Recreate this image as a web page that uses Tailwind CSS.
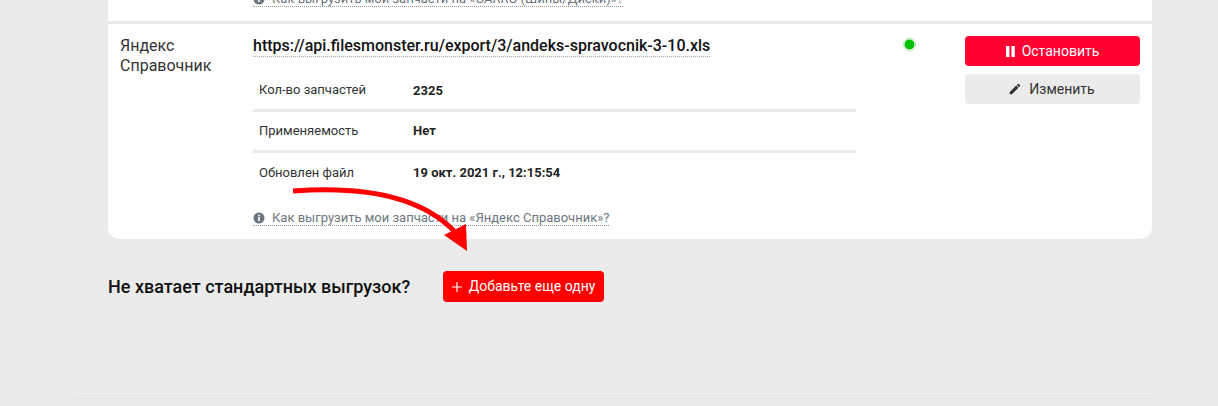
<!DOCTYPE html>
<html lang="ru">
<head>
<meta charset="UTF-8">
<title>Выгрузки</title>
<script src="https://cdn.jsdelivr.net/npm/@tailwindcss/browser@4"></script>
</head>
<body class="bg-[#ebebeb] font-['Roboto',sans-serif] h-[406px] overflow-hidden relative">

<div class="mx-[66px] w-[1086px] h-[406px] flex flex-col">
  <div class="ml-[42px] w-[1044px] bg-white rounded-b-xl overflow-hidden">
    <!-- previous row, cut off by the top of the window -->
    <div class="h-[21px] pl-[145px] flex items-end pb-[14px] overflow-visible">
      <a class="flex items-center gap-[7px] text-[13px] leading-[15px] text-[#6b7680] border-b border-dotted border-[#999] whitespace-nowrap h-[16px]">
        <svg class="w-[12px] h-[12px]" viewBox="0 0 12 12"><circle cx="6" cy="6" r="5.5" fill="#6b7680"/><rect x="5.2" y="5" width="1.6" height="4" fill="#fff"/><rect x="5.2" y="2.7" width="1.6" height="1.5" fill="#fff"/></svg>
        Как выгрузить мои запчасти на «САRRO (Шины/Диски)»?
      </a>
    </div>

    <div class="border-t-[3px] border-[#ebebeb] h-[218px] flex">
      <div class="w-[145px] pl-[12px] pt-[12px] text-[16px] leading-[20px] text-[#333]">Яндекс<br>Справочник</div>

      <div class="w-[603px] pt-[12px]">
        <a class="block w-fit text-[16px] leading-[20px] font-medium text-[#111] border-b border-dotted border-[#aaa]">https://api.filesmonster.ru/export/3/andeks-spravocnik-3-10.xls</a>
        <div class="mt-[11px] text-[13px]">
          <div class="h-[44px] pt-[4px] flex items-center border-b-[3px] border-[#ebebeb] px-[6px]">
            <span class="w-[154px] mb-[2px] text-[#333]">Кол-во запчастей</span><b class="font-bold text-[#222]">2325</b>
          </div>
          <div class="h-[41px] flex items-center border-b-[3px] border-[#ebebeb] px-[6px]">
            <span class="w-[154px] text-[#333]">Применяемость</span><b class="font-bold text-[#222]">Нет</b>
          </div>
          <div class="h-[39px] flex items-center px-[6px]">
            <span class="w-[154px] text-[#333]">Обновлен файл</span><b class="font-bold text-[#222]">19 окт. 2021 г., 12:15:54</b>
          </div>
        </div>
        <a class="mt-[18px] flex w-fit items-center gap-[7px] text-[13px] leading-[15px] text-[#6b7680] border-b border-dotted border-[#999] h-[16px]">
          <svg class="w-[12px] h-[12px]" viewBox="0 0 12 12"><circle cx="6" cy="6" r="5.5" fill="#6b7680"/><rect x="5.2" y="5" width="1.6" height="4" fill="#fff"/><rect x="5.2" y="2.7" width="1.6" height="1.5" fill="#fff"/></svg>
          Как выгрузить мои запчасти на «Яндекс Справочник»?
        </a>
      </div>

      <div class="w-[109px] pt-[14px] pl-[47px]">
        <svg class="w-[13px] h-[13px]" viewBox="0 0 13 13"><circle cx="6.5" cy="6.5" r="5" fill="#00c000"/><circle cx="6.5" cy="6.5" r="6.1" fill="none" stroke="#8fe08f" stroke-width="0.7"/></svg>
      </div>

      <div class="w-[175px] pt-[12px] flex flex-col gap-[8px]">
        <button class="h-[30px] rounded bg-[#ff0033] text-white text-[14px] flex items-center justify-center gap-[7px]">
          <svg class="w-[9px] h-[11px]" viewBox="0 0 9 11"><rect x="0" y="0" width="3.4" height="11" fill="#fff"/><rect x="5.4" y="0" width="3.4" height="11" fill="#fff"/></svg>
          Остановить
        </button>
        <button class="h-[30px] pr-[2px] rounded bg-[#ebebeb] text-[#333] text-[14px] flex items-center justify-center gap-[7px]">
          <svg class="w-[14px] h-[14px]" viewBox="0 0 24 24"><path fill="#333" d="M3 17.25V21h3.75L17.81 9.94l-3.75-3.75L3 17.25zM20.71 7.04a1 1 0 0 0 0-1.41l-2.34-2.34a1 1 0 0 0-1.41 0l-1.83 1.83 3.75 3.75 1.83-1.83z"/></svg>
          Изменить
        </button>
      </div>
    </div>
  </div>

  <div class="ml-[42px] mt-[32px] flex items-center">
    <span class="w-[335px] text-[18px] font-medium text-[#111]">Не хватает стандартных выгрузок?</span>
    <button class="h-[31px] w-[161px] rounded bg-[#ff0000] text-white text-[14px] flex items-center justify-center gap-[7px]">
      <svg class="w-[10px] h-[10px]" viewBox="0 0 10 10"><path d="M5 0v10M0 5h10" stroke="#fff" stroke-width="1.2"/></svg>
      Добавьте еще одну
    </button>
  </div>

  <div class="mt-auto mb-[7px] ml-[9px] w-[1077px] border-t border-[#dfe3e8]"></div>
</div>

<!-- hand-drawn arrow on top of the card -->
<svg class="absolute left-0 top-0 pointer-events-none" width="1218" height="406" viewBox="0 0 1218 406">
  <path d="M293 191 C 360 186, 420 195, 455 232" fill="none" stroke="#ff0000" stroke-width="5"/>
  <path d="M444 235 L466 224 L467 251 Z" fill="#ff0000"/>
</svg>
</body>
</html>
